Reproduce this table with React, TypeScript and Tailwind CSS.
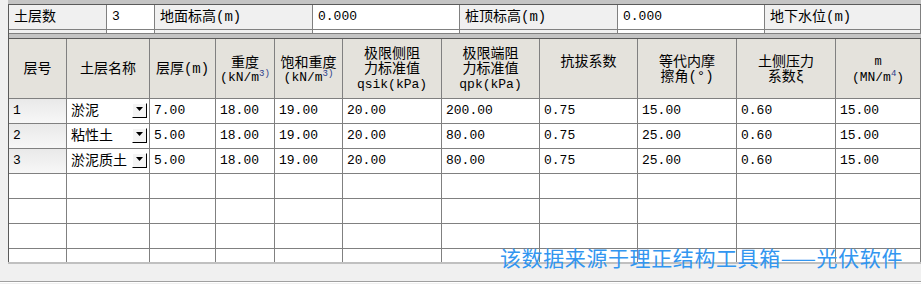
import React from "react";

const colW = [
  "w-[58px]",
  "w-[83px]",
  "w-[66px]",
  "w-[59px]",
  "w-[68px]",
  "w-[99px]",
  "w-[98px]",
  "w-[98px]",
  "w-[99px]",
  "w-[99px]",
];

const topCells: { w: string; text: string; value: boolean }[] = [
  { w: "w-[98px]", text: "土层数", value: false },
  { w: "w-[48px]", text: "3", value: true },
  { w: "w-[158px]", text: "地面标高(m)", value: false },
  { w: "w-[147px]", text: "0.000", value: true },
  { w: "w-[158px]", text: "桩顶标高(m)", value: false },
  { w: "w-[147px]", text: "0.000", value: true },
  { w: "flex-1", text: "地下水位(m)", value: false },
];

const rows = [
  ["1", "淤泥", "7.00", "18.00", "19.00", "20.00", "200.00", "0.75", "15.00", "0.60", "15.00"],
  ["2", "粘性土", "5.00", "18.00", "19.00", "20.00", "80.00", "0.75", "25.00", "0.60", "15.00"],
  ["3", "淤泥质土", "5.00", "18.00", "19.00", "20.00", "80.00", "0.75", "25.00", "0.60", "15.00"],
  ["", "", "", "", "", "", "", "", "", "", ""],
  ["", "", "", "", "", "", "", "", "", "", ""],
  ["", "", "", "", "", "", "", "", "", "", ""],
  ["", "", "", "", "", "", "", "", "", "", ""],
];

function DropBtn() {
  return (
    <div className="absolute right-[2px] top-[4px] w-[15px] h-[15px] bg-[#f4f4f4] border-t border-l border-t-white border-l-white border-r border-b border-r-black border-b-black flex justify-center pt-[3px]">
      <svg width="7" height="4" viewBox="0 0 7 4">
        <polygon points="0,0 7,0 3.5,4" fill="#000" />
      </svg>
    </div>
  );
}

function HeaderCell({ w, children }: { w: string; children: React.ReactNode }) {
  return (
    <div
      className={`${w} shrink-0 h-[60px] border-r border-b border-[#808080] bg-[#e4e2dc] flex flex-col items-center justify-center text-center leading-[15px] text-[14px] pt-[2px]`}
    >
      {children}
    </div>
  );
}

export default function App() {
  return (
    <div className="relative w-[921px] h-[284px] overflow-hidden bg-[#f0f0f0] text-black font-['Liberation_Mono','Noto_Sans_CJK_SC',monospace]">
      <div className="ml-[8px] h-[4px] bg-[#c4c4c4]" />
      <div className="ml-[8px] border-l border-[#5a5a5a]">
        <div className="border-t border-[#5a5a5a]" />
        <div className="flex h-[25px]">
          {topCells.map((c, i) => (
            <div
              key={i}
              className={`${c.w} shrink-0 h-[25px] border-r border-b border-[#808080] flex items-center pl-[5px] ${
                c.value ? "bg-white text-[13px]" : "bg-[#f0f0f0] text-[14px]"
              }`}
            >
              {c.text}
            </div>
          ))}
        </div>
        <div className="flex h-[4px]">
          {topCells.map((c, i) => (
            <div
              key={i}
              className={`${c.w} shrink-0 h-[4px] border-r border-b border-[#808080] ${
                c.value ? "bg-white" : "bg-[#f0f0f0]"
              }`}
            />
          ))}
        </div>
        <div className="h-[4px] bg-[#c4c4c4]" />
      </div>

      <div className="ml-[8px] h-[224px] overflow-hidden border-t border-l border-[#5a5a5a] bg-white">
        <div className="flex">
          <HeaderCell w={colW[0]}>层号</HeaderCell>
          <HeaderCell w={colW[1]}>土层名称</HeaderCell>
          <HeaderCell w={colW[2]}>层厚(m)</HeaderCell>
          <HeaderCell w={colW[3]}>
            <span>重度</span>
            <span className="text-[13px] leading-[13px]">
              (kN/m<sup className="text-[9px] text-[#2a3c8a]">3)</sup>
            </span>
          </HeaderCell>
          <HeaderCell w={colW[4]}>
            <span>饱和重度</span>
            <span className="text-[13px] leading-[13px]">
              (kN/m<sup className="text-[9px] text-[#2a3c8a]">3)</sup>
            </span>
          </HeaderCell>
          <HeaderCell w={colW[5]}>
            <span>极限侧阻</span>
            <span>力标准值</span>
            <span className="text-[13px]">qsik(kPa)</span>
          </HeaderCell>
          <HeaderCell w={colW[6]}>
            <span>极限端阻</span>
            <span>力标准值</span>
            <span className="text-[13px]">qpk(kPa)</span>
          </HeaderCell>
          <HeaderCell w={colW[7]}>
            <span>抗拔系数</span>
            <span>&nbsp;</span>
          </HeaderCell>
          <HeaderCell w={colW[8]}>
            <span>等代内摩</span>
            <span>擦角(°)</span>
          </HeaderCell>
          <HeaderCell w={colW[9]}>
            <span>土侧压力</span>
            <span>系数ξ</span>
          </HeaderCell>
          <HeaderCell w="flex-1">
            <span className="text-[12px]">m</span>
            <span className="text-[13px]">
              (MN/m<sup className="text-[9px] text-[#2a3c8a]">4</sup>)
            </span>
          </HeaderCell>
        </div>
        {rows.map((r, ri) => (
          <div key={ri} className="flex">
            {r.map((v, ci) => {
              const w = ci < 10 ? colW[ci] : "flex-1";
              const first = ci === 0;
              const bg =
                first && ri < 3
                  ? "bg-gradient-to-b from-[#e9e9e9] to-[#f7f7f7]"
                  : "bg-white";
              return (
                <div
                  key={ci}
                  className={`${w} shrink-0 relative h-[25px] border-r border-b border-[#808080] ${bg} flex items-center pl-[4px] ${
                    ci === 1 ? "text-[14px]" : "text-[13px]"
                  } whitespace-nowrap`}
                >
                  {v}
                  {ci === 1 && ri < 3 ? <DropBtn /> : null}
                </div>
              );
            })}
          </div>
        ))}
      </div>
      <div className="ml-[8px] h-[2px] bg-[#c0c0c0]" />
      <div className="h-[17px]" />
      <div className="h-[1px] bg-[#a0a0a0]" />
      <div className="h-[1px] bg-white" />

      <div className="absolute left-[500px] top-[246px] text-[21px] leading-[22px] tracking-[0.6px] text-[#3296f0] whitespace-nowrap font-['Noto_Sans_CJK_SC',sans-serif]">
        该数据来源于理正结构工具箱——光伏软件
      </div>
    </div>
  );
}
